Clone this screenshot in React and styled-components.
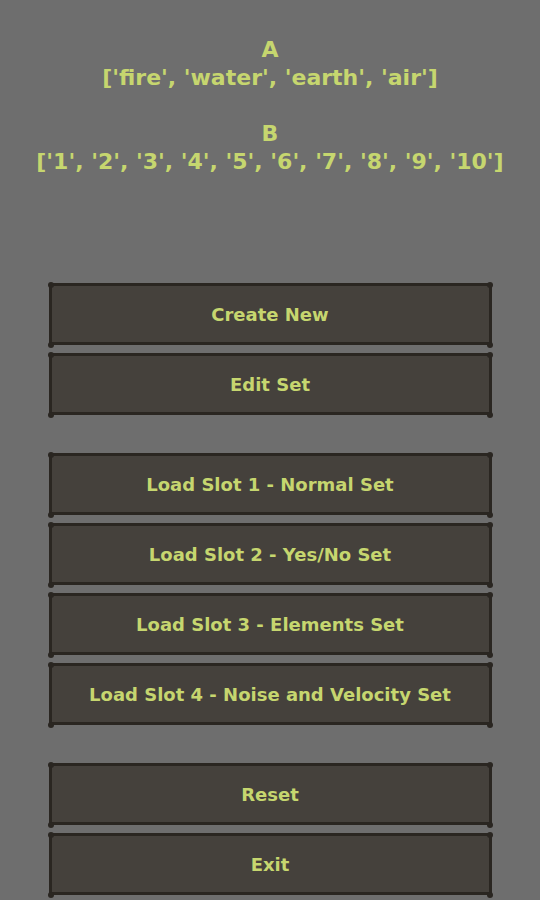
import React from "react";
import styled, { createGlobalStyle } from "styled-components";

const GlobalStyle = createGlobalStyle`
  html, body { margin:0; padding:0; background:#6e6e6e; }
  body { font-family:"DejaVu Sans", Verdana, sans-serif; }
`;

const groups = [
  ["Create New", "Edit Set"],
  [
    "Load Slot 1 - Normal Set",
    "Load Slot 2 - Yes/No Set",
    "Load Slot 3 - Elements Set",
    "Load Slot 4 - Noise and Velocity Set",
  ],
  ["Reset", "Exit"],
];

export default function App() {
  return (
    <Page>
      <GlobalStyle />
      <Info>
        <Line>A</Line>
        <Line>['fire', 'water', 'earth', 'air']</Line>
        <Line>&nbsp;</Line>
        <Line>B</Line>
        <Line>['1', '2', '3', '4', '5', '6', '7', '8', '9', '10']</Line>
      </Info>

      <Menu>
        {groups.map((g, i) => (
          <Group key={i}>
            {g.map((label) => (
              <Button key={label}>{label}</Button>
            ))}
          </Group>
        ))}
      </Menu>
    </Page>
  );
}

/* ───────── styles ───────── */
const Page = styled.div`
  width:540px; height:900px; overflow:hidden;
  background:#6e6e6e; display:flex; flex-direction:column; align-items:center;
  padding-top:36px; box-sizing:border-box;
`;

const Info = styled.div`
  display:flex; flex-direction:column; align-items:center;
  color:#c6d66f; font-size:22px; font-weight:bold;
`;
const Line = styled.div` line-height:28px; white-space:nowrap; `;

const Menu = styled.div`
  margin-top:107px; width:443px;
  display:flex; flex-direction:column; gap:38px;
`;
const Group = styled.div` display:flex; flex-direction:column; gap:8px; `;

const Button = styled.div`
  position:relative; height:62px; box-sizing:border-box;
  background:#45413c; border:3px solid #2a2621;
  display:flex; align-items:center; justify-content:center;
  color:#c6d66f; font-size:18px; font-weight:bold; cursor:pointer;
  &::before, &::after{
    content:""; position:absolute; width:6px; height:6px; border-radius:50%;
    background:#2a2621; top:-4px;
  }
  &::before{ left:-4px; box-shadow:0 60px 0 #2a2621; }
  &::after{ right:-4px; box-shadow:0 60px 0 #2a2621; }
`;
